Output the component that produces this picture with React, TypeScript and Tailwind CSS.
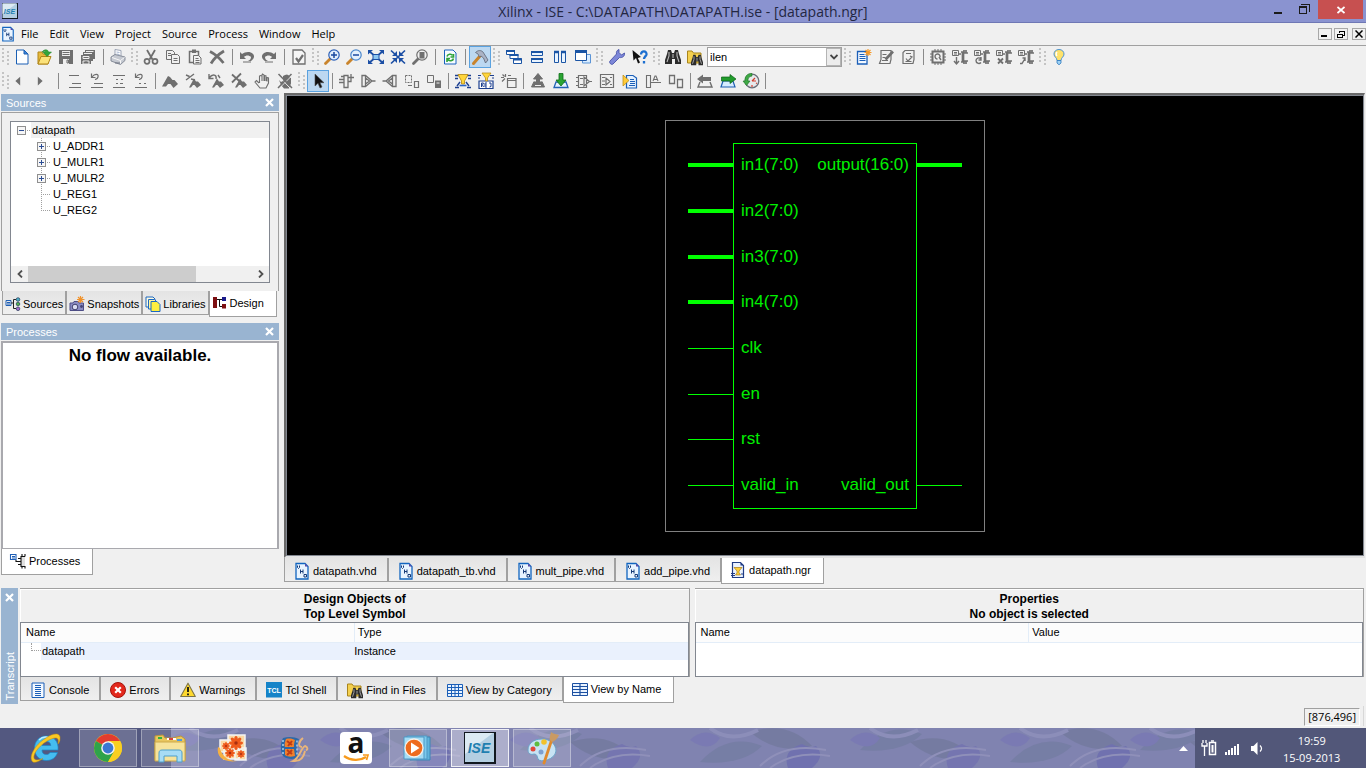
import React from "react";

const G = "#6f6f6f";

function Svg({ children, size = 18, vb = 16 }: { children: React.ReactNode; size?: number; vb?: number }) {
  return (
    <svg width={size} height={size} viewBox={`0 0 ${vb} ${vb}`} fill="none" aria-hidden="true" className="shrink-0 overflow-visible">
      {children}
    </svg>
  );
}

const binoculars = (
  <>
    <path d="M3 1h3l1 3h2l1-3h3l1 4 2 6v4h-6v-5H7v5H0v-4l2-6z" fill="#2c2c2c" />
    <path d="M4 3v4l-2 6M12 3v4l2 6M8 5v4" stroke="#b9b9b9" strokeWidth="1.100" />
  </>
);

const magnifier = (color: string, handle: string, fill: string) => (
  <>
    <path d="M6.500 9.500L1.500 14.500" stroke={handle} strokeWidth="2.800" strokeLinecap="round" />
    <circle cx="10" cy="6" r="5.200" fill={fill} stroke={color} strokeWidth="1.200" />
  </>
);

const chipTail = <path d="M9 3h1.500v10H9M12 1v3M14 1v3h-2.500v8H14v3M12 12v3M16 4h-3M16 12h-3" stroke={G} strokeWidth="1.700" />;
const chipDoc = (
  <>
    <path d="M.5 1.500h6v5h-6zM2 3.500h3M2 5h3" stroke={G} strokeWidth="1" />
    <path d="M6 5h3" stroke={G} strokeWidth="1.500" />
  </>
);

const smallFlag = <path d="M4 14.500l5-9 2 3h2l3 3.500-4 3-2.500-3H8l-2 2.500z" fill={G} />;

const art: Record<string, React.ReactNode> = {
  newFile: (
    <>
      <path d="M2.500 1h7.500l4 4v10H2.500z" fill="#fdfeff" stroke="#1a5fb4" />
      <path d="M10 1v4h4z" fill="#3f86d8" stroke="#1a5fb4" />
    </>
  ),
  open: (
    <>
      <path d="M2 15V3h4l1 2h5v10z" fill="#e7b93c" stroke="#b08518" />
      <path d="M2 15l3-7.500h10L12 15z" fill="#fbe27a" stroke="#b08518" />
      <path d="M6 3c2-3 6-3 6.500 0h3l-4.500 4.500-4-4.500h2.500C9.500 2 8.500 2 6 3z" fill="#33a53a" stroke="#1d7d24" strokeWidth=".5" />
    </>
  ),
  save: (
    <>
      <path d="M1 1h14v14H1z" fill={G} />
      <path d="M4 2h8v5H4zM5 10h6v5H5z" fill="#efefef" />
      <path d="M4.500 3.500h7M4.500 5.500h7M9 11h1.500v3H9z" stroke={G} />
    </>
  ),
  saveAll: (
    <>
      <path d="M5 1h10v9h-2v2h-2v3H1V6h2V3h2z" fill={G} />
      <path d="M6 2.500h7.500M4 4.500h8M3 7.500h6v2H3zM3 12h6v3H3z" stroke="#eee" />
      <path d="M6 12v2" stroke={G} />
    </>
  ),
  print: (
    <>
      <path d="M5 7V.5l6 1v6" fill="#fff" stroke="#9aa3b5" />
      <path d="M6.500 3l3 .5M6.500 5l3 .5" stroke="#8b9fc2" strokeWidth=".8" />
      <path d="M1 8l4-2.500L15 8v3.500l-4.500 4L1 12z" fill="#c5c9d1" stroke="#7e8492" strokeWidth=".9" />
      <path d="M2 8.500l8.500 3 4-3M10.500 11.500v3" stroke="#f8f8f8" />
      <path d="M5 14h5" stroke="#6d7280" />
    </>
  ),
  cut: (
    <>
      <path d="M4 1l5.500 9.500M12 1L6.500 10.500" stroke={G} strokeWidth="1.800" />
      <circle cx="4" cy="12.300" r="2.500" stroke={G} strokeWidth="1.700" />
      <circle cx="12" cy="12.300" r="2.500" stroke={G} strokeWidth="1.700" />
    </>
  ),
  copy: (
    <>
      <path d="M1.500 1.500h6l2 2v7h-8z" stroke={G} />
      <path d="M6.500 5.500h6l2 2v7h-8z" fill="#f0f0f0" stroke={G} />
      <path d="M3 4.500h3M3 6.500h3M8.500 9.500h4M8.500 11.500h4" stroke={G} />
    </>
  ),
  paste: (
    <>
      <path d="M2.500 2.500h9v11h-9z" stroke={G} strokeWidth="1.500" />
      <path d="M5 .5h4V4H5z" fill={G} />
      <path d="M6.500 6.500h5l2.500 2.500v6H6.500z" fill="#f0f0f0" stroke={G} />
      <path d="M8.500 9.500h3M8.500 11.500h4M8.500 13.500h4" stroke={G} />
    </>
  ),
  del: <path d="M1 2.500c5 2.500 10 7 13.500 11.500M15 2C10 5 5 9.500 2 14.500" stroke={G} strokeWidth="2.700" />,
  undo: (
    <>
      <path d="M1 3v7h6L5 8c2-2 5-2 7 0 0 2-1 3-3 4h3c3-2 4-5 2-7-3-3-8-2-11 0z" fill={G} />
      <path d="M4 13h8" stroke={G} />
    </>
  ),
  redo: (
    <>
      <path d="M15 3v7H9l2-2C9 6 6 6 4 8c0 2 1 3 3 4H4C1 10 0 7 2 5c3-3 8-2 11 0z" fill={G} />
      <path d="M4 13h8" stroke={G} />
    </>
  ),
  check: (
    <>
      <path d="M2 1h9l3 3v11H2z" fill="#f5f5f5" stroke={G} strokeWidth="1.300" />
      <path d="M5 9l2.500 3.500L12 6" stroke={G} strokeWidth="2.200" />
    </>
  ),
  zoomIn: (
    <>
      {magnifier("#2b5fb8", "#c9842c", "#e4f0fc")}
      <path d="M7 6h6M10 3v6" stroke="#1b4aa0" strokeWidth="1.500" />
    </>
  ),
  zoomOut: (
    <>
      {magnifier("#4a86cc", "#c9842c", "#e4f0fc")}
      <path d="M7 6h6" stroke="#1b4aa0" strokeWidth="1.500" />
    </>
  ),
  fit: (
    <>
      <path d="M1 2l14 12M15 2L1 14" stroke="#1c4fa5" strokeWidth="1.800" />
      <path d="M5 5.500h6v5H5z" fill="#8cc6f2" stroke="#1c4fa5" />
      <path d="M0 1h5L0 5.500zM16 1h-5l5 4.500zM0 15h5l-5-4.500zM16 15h-5l5-4.500z" fill="#1c4fa5" />
    </>
  ),
  shrink: (
    <>
      <path d="M1 1.500l14 13M15 1.500L1 14.500" stroke="#1c4fa5" strokeWidth="1.700" />
      <path d="M7 2v5H2zM9 2v5h5zM7 14V9H2zM9 14V9h5z" fill="#1c4fa5" />
    </>
  ),
  zoomSel: (
    <>
      {magnifier(G, G, "#f2f2f2")}
      <path d="M7.500 3h5v6.500h-5z" fill={G} />
    </>
  ),
  refresh: (
    <>
      <path d="M2.500 1h8.500l3 3v11H2.500z" fill="#f6fbff" stroke="#1a63bd" />
      <path d="M5 7.500C5.500 5 9.500 4.500 10.500 6.500M11.500 5v3H8.500M11.500 9.500c-.5 2.500-4.500 3-5.500 1M5 13V9.500h3" stroke="#2ea33a" strokeWidth="1.600" />
    </>
  ),
  hammer: (
    <>
      <path d="M8 7L1.500 14.500" stroke="#c9842c" strokeWidth="3" strokeLinecap="round" />
      <path d="M3.500 3.500C6 1 9 1 11 3l5 8-2.500 3-2-5-2.500-2-1.500 1L6 5z" fill="#aab2c4" stroke="#5c6475" strokeWidth=".8" />
    </>
  ),
  cascade: (
    <>
      <path d="M.5 1.500h8v4h-8zM4 5.500h8v4H4zM7.500 9.500h8v5h-8z" fill="#fff" stroke="#1b55a5" />
      <path d="M0 2h9M3.500 6h9M7 10.500h9" stroke="#1b55a5" strokeWidth="2" />
    </>
  ),
  tileH: (
    <>
      <path d="M2.500 2.500h11v4h-11zM2.500 9.500h11v4h-11z" fill="#e9f4ff" stroke="#1b55a5" />
      <path d="M2 3h12M2 10h12" stroke="#1b55a5" strokeWidth="2.200" />
    </>
  ),
  tileV: (
    <>
      <path d="M2.500 2.500h4v11h-4zM9.500 2.500h4v11h-4z" fill="#e9f4ff" stroke="#1b55a5" />
      <path d="M2 3h5M9 3h5" stroke="#1b55a5" strokeWidth="2.400" />
    </>
  ),
  arrange: (
    <>
      <path d="M7.500 5.500h8v8.500h-8z" fill="#d8ecff" stroke="#5b94d6" />
      <path d="M.5 2.500h11v9H.5z" fill="#fff" stroke="#1b55a5" />
      <path d="M0 2.500h12" stroke="#1b55a5" strokeWidth="3" />
    </>
  ),
  wrench: (
    <path d="M10 .5c-2 .5-3 2.500-2.500 4.500L1 12c-1.500 1.500 1.500 4.500 3 3l6.500-6.500c2.500.5 5.500-1 5-4.500l-3 2-2.500-2.500z" fill="#7d87d8" stroke="#4852a8" strokeWidth=".9" />
  ),
  whatsThis: (
    <>
      <path d="M.5 1l1 10.500L4 9l2 5.500 2-1-2.200-4.500L9 8z" fill="#111" />
      <path d="M9 5.500c0-4.500 6-4 5.500 0C14 7.500 12 7.500 12 10M12 12v2.500" stroke="#1c6fd0" strokeWidth="2.300" />
    </>
  ),
  find: binoculars,
  findFiles: (
    <>
      <path d="M.5 14V2H5l1.500 2H14v10z" fill="#f4d04f" stroke="#a8841c" />
      <g transform="translate(4 5) scale(.75)">{binoculars}</g>
    </>
  ),
  newDoc: (
    <>
      <path d="M1.500 2.500h9.500v12.500H1.500z" fill="#f2f8ff" stroke="#1b5fb8" strokeWidth="1.300" />
      <path d="M3.500 5.500h5M3.500 7.500h6M3.500 9.500h6M3.500 11.500h6" stroke="#1b5fb8" />
      <path d="M12 0v7M8.500 3.500h7M9.500 1l5 5M14.500 1l-5 5" stroke="#f59a2a" strokeWidth="1.200" />
    </>
  ),
  editDoc: (
    <>
      <path d="M3 1.500h10v9l-1 4H1.500l1.500-4z" stroke={G} strokeWidth="1.200" />
      <path d="M4.500 5.500h4M4.500 8.500h3M4 11.500h6" stroke={G} />
      <path d="M7.500 10.500L15 2.500" stroke={G} strokeWidth="2.600" />
    </>
  ),
  docCheck: (
    <>
      <path d="M5 1.500h9v9l-1 4H3v-11z" stroke={G} strokeWidth="1.200" />
      <path d="M6 4.500h5M10 7l2 1-4 4-2-2.500M5.500 12.500h6" stroke={G} strokeWidth="1.200" />
    </>
  ),
  chip: (
    <>
      <path d="M2.500 2.500h11v11h-11z" stroke={G} strokeWidth="2" />
      <path d="M5 0v3M8 0v3M11 0v3M5 13v3M8 13v3M11 13v3M0 5h3M0 8h3M0 11h3M13 5h3M13 8h3M13 11h3" stroke={G} />
      <path d="M7.500 10A2.500 2.500 0 1 1 10 8M9 8l2 3" stroke={G} strokeWidth="1.400" />
    </>
  ),
  chipDown: (
    <>
      {chipDoc}
      {chipTail}
      <path d="M4.500 8v6M2 12l2.500 3L7 12" stroke={G} strokeWidth="1.400" />
    </>
  ),
  chipTurn: (
    <>
      {chipDoc}
      {chipTail}
      <path d="M7 10c-2-2-5-1-5 1.500S5 15.500 7 13.500M7 8v3H4.500" stroke={G} strokeWidth="1.400" />
    </>
  ),
  chipX: (
    <>
      {chipDoc}
      {chipTail}
      <path d="M2 9.500l5 5M7 9.500l-5 5" stroke={G} strokeWidth="1.800" />
    </>
  ),
  chipUp: (
    <>
      {chipDoc}
      {chipTail}
      <path d="M2 14.500h2l3-5M4.500 9H7v3" stroke={G} strokeWidth="1.400" />
    </>
  ),
  bulb: (
    <>
      <path d="M8 .5c-3.200 0-5 2.200-5 4.600C3 8 6 8.500 6 11.500h4C10 8.500 13 8 13 5.100 13 2.700 11.200.5 8 .5z" fill="#ffe26a" stroke="#4a92d2" />
      <path d="M6 3C5 4.200 5 6 6 7" stroke="#fff" strokeWidth="1.400" />
      <path d="M6 11.500h4V14l-2 1.800L6 14z" fill="#9fd2f5" stroke="#2d79bd" strokeWidth=".8" />
    </>
  ),
  prev: <path d="M10.500 3v10L5 8z" fill={G} />,
  next: <path d="M5.500 3v10L11 8z" fill={G} />,
  lines: <path d="M2 2.500h10M5 10.500h9M2 14.500h12" stroke={G} />,
  linesUndo: <path d="M2.500.5v4h4M3 4c3-4 7-3 6 0-.5 2-1.500 2-3 2.500M5 10.500h9M2 14.500h12" stroke={G} strokeWidth="1.200" />,
  linesDot: <path d="M2 2.500h12M5 6.500h2M10 6.500h2M5 10.500h2M9 10.500h3M2 14.500h12" stroke={G} strokeWidth="1.200" />,
  linesUndoDot: <path d="M2.500.5v4h4M3 4c3-4 7-3 6 0-.5 2-1.500 2-3 2.500M6 10.500h2M11 10.500h2M2 14.500h12" stroke={G} strokeWidth="1.200" />,
  flag: <path d="M0 13.500L6 3l2 1 2.500 3h2l3.500 4-4.500 4-3-4H6l-2 2.500z" fill={G} />,
  flagNext: (
    <>
      {smallFlag}
      <path d="M1 7l8-6M1 2l3.500 1.500M6 6l4 1" stroke={G} strokeWidth="1.400" />
    </>
  ),
  flagPrev: (
    <>
      {smallFlag}
      <path d="M1 1v4.500h4.500M1 5c4-5 8-3 7 1M10 2l2 3" stroke={G} strokeWidth="1.400" />
    </>
  ),
  flagClear: (
    <>
      {smallFlag}
      <path d="M1 1.500l9 8M10 .5l-9 9" stroke={G} strokeWidth="1.800" />
    </>
  ),
  hand: (
    <path d="M5 10L2.500 7.500 1 9l5 6h6l2.500-5V5l-1.500-.5V8.500M12 8V3l-1.500-.5V8M10 8V2L8.500 1 8 2v6M8 8V3L6.500 2.500 5.500 3v7" stroke={G} strokeWidth="1.100" />
  ),
  handX: (
    <>
      <path d="M4 9L2 7l2 5 3 3.500h5l2-5V5l-2-1V2.500L10 1.500 8 2 6 3v5z" fill={G} />
      <path d="M0 1.500L14 16M16 1.500L1.500 16" stroke="#efefef" strokeWidth="1" />
      <path d="M1.500 1L15 15M14.500 1L1 15" stroke={G} strokeWidth="1.500" />
    </>
  ),
  pointer: <path d="M5 1v12l3-2.700L10 15l2-1-2-4.300h4z" fill="#111" stroke="#4d4d4d" strokeWidth=".6" />,
  gateIn: (
    <path d="M6 2.500h4v12H6zM1 6.500h5M1 9.500h5M3 3.500h3M10 4.500h6M13 4.500v4h-3M13 1v3" stroke={G} strokeWidth="1.300" />
  ),
  gateFwd: <path d="M2 2.500v11h3.500L12 8 5.500 2.500zM5.500 3v10M5.500 5l4 3-4 3M12 8h3.500" stroke={G} strokeWidth="1.300" />,
  gateBack: <path d="M14 2.500v11h-3.500L4 8l6.500-5.500zM10.500 3v10M10.500 5l-4 3 4 3M4 8H.5" stroke={G} strokeWidth="1.300" />,
  boxesDash: (
    <>
      <path d="M1.500 2.500h6v7h-6z" stroke={G} strokeDasharray="2 1" />
      <path d="M10.500 8.500h4v6h-4zM4 12.500h4" stroke={G} strokeWidth="1.200" />
    </>
  ),
  boxesLock: (
    <>
      <path d="M1.500 2.500h6v7h-6z" stroke={G} />
      <path d="M9 7.500h6V15H9z" fill={G} />
      <path d="M10.500 10h3" stroke="#eee" />
    </>
  ),
  funnel: (
    <>
      <path d="M0 2.500h3.500M12 2.500h4M0 5.500h3M13 5.500h3M0 14.500h4M12 14.500h4M2 13l3-4M14 13l-3-4" stroke="#1c3f8f" strokeWidth="1.400" />
      <path d="M3 1.500h10L9.500 8v3h-3V8z" fill="#ffd63c" stroke="#b1860f" strokeWidth=".8" />
      <path d="M4.500 12.500h7" stroke="#2a65c8" strokeWidth="1.600" />
    </>
  ),
  funnelRej: (
    <>
      <path d="M0 2.500h3M12 2.500h4M0 5h2M14 5h2M1 8h14v7.500H1z" fill="#fff" stroke="#1c3f8f" strokeWidth="1.200" />
      <path d="M4 0h9L9.500 5v3h-2V5z" fill="#ffd63c" stroke="#b1860f" strokeWidth=".7" />
      <path d="M3.500 14v-4h2l-1 2 1 2M9 10H7v4h2M7 12h2M11 10h2v3.500l-1.500.5" stroke="#1c3f8f" />
    </>
  ),
  windowSpark: (
    <>
      <path d="M6.500 5.500h8.500v9H6.500zM6.500 7.500H15" stroke={G} strokeWidth="1.200" />
      <path d="M0 4.500h3M4.500 1v3M1.500 1.500l2 2M1 8.500l3-3M7 2.500h3" stroke={G} strokeWidth="1.200" />
    </>
  ),
  pushUp: (
    <>
      <path d="M8 .5L3.500 6h3v4.500h3V6h3zM4 8.500L1.500 14h13L12 8.500" fill={G} stroke={G} />
      <path d="M5 12.500h6" stroke="#eee" />
    </>
  ),
  pushDown: (
    <>
      <path d="M3 9l-2 5.500h14L13 9z" fill="#e3f1ff" stroke="#2262b5" strokeWidth="1.300" />
      <path d="M6 .5h4V7h3l-5 6-5-6h3z" fill="#2aa432" stroke="#0e6d18" strokeWidth=".8" />
    </>
  ),
  schem: (
    <path d="M2.500 2.500h8v12h-8zM0 4.500h2M0 8.500h2M0 12.500h2M4 5.500h3M4 11.500h3M8 4v9l5.500-4.500zM13 8.500h3" stroke={G} strokeWidth="1.200" />
  ),
  schemBox: <path d="M1.500 1.500h13v13h-13zM3 4.500h3M3 8h3M3 11.500h3M7 5v7l4-3.500zM11 4.500h2M11 11.500h2" stroke={G} strokeWidth="1.200" />,
  docYellow: (
    <>
      <path d="M4.500 2.500H11l3.500 2.500v10h-10z" fill="#e6f2ff" stroke="#1b5fb8" strokeWidth="1.200" />
      <path d="M8 6.500h4M8 8.500h5M8 10.500h5M7 12.500h6" stroke="#1b5fb8" />
      <path d="M1 2l6 5.500L1 13z" fill="#ffcb3a" stroke="#b8860b" strokeWidth=".7" />
    </>
  ),
  align: <path d="M1.500 2.500h4v12h-4zM6 9.500h10M8 8L10 3h1l2 5M9 6.500h3" stroke={G} strokeWidth="1.100" />,
  boxes: <path d="M1.500 2.500h5v8h-5zM9.500 6.500h5v8h-5z" stroke={G} strokeWidth="1.300" />,
  back: (
    <>
      <path d="M0 6l6-4.500V4h8v4H6v2.500z" fill={G} />
      <path d="M3 9l-2 5h14l-2-5" stroke={G} strokeWidth="1.400" />
    </>
  ),
  forward: (
    <>
      <path d="M3 8l-2 6h14l-2-6z" fill="#d6ebff" stroke="#1c5db0" strokeWidth="1.200" />
      <path d="M16 6l-6-4.500V4H1.500v4H10v2.500z" fill="#219c2c" stroke="#0c6216" strokeWidth=".7" />
    </>
  ),
  gauge: (
    <>
      <circle cx="9" cy="8" r="6.800" fill="#e7e9ed" stroke="#6a6f7a" strokeWidth="1.300" />
      <path d="M9 8l3-3M9 8h4M9 12v2M13 10l1 .5" stroke="#d43c2c" strokeWidth="1.200" />
      <path d="M9 .5C4 0 1.500 4 2 8H0l3.500 4.500L7 8H5C4.700 5 6 3.500 9 3z" fill="#3ea845" stroke="#1b7024" strokeWidth=".6" />
    </>
  ),
};

const hdlDoc = (
  <>
    <path d="M2 .5h9l3 3V16H2z" fill="#e9f4ff" stroke="#1265bf" strokeWidth="1.300" />
    <path d="M11 .5v3h3z" fill="#5a4aa8" />
    <path d="M3.500 2.500v2l1 1 1-1v-2M6.500 6.500v4M9 6.500v4M6.500 8.500H9M10 11.500h2.500V14H10z" stroke="#163a77" />
  </>
);

const isePlate = (
  <>
    <path d="M0 0h16v16H0z" fill="#11181f" />
    <path d="M.5.500h14.500v14.500H.500z" fill="#b4cfe2" />
    <path d="M.500.500h14L.500 11z" fill="#dceaf3" />
    <text x="7.500" y="10.500" textAnchor="middle" fontFamily="Liberation Sans, sans-serif" fontSize="7" fontWeight="bold" fontStyle="italic" fill="#1f7fb0">ISE</text>
  </>
);

const sheet: Record<string, React.ReactNode> = {
  srcTree: (
    <>
      <path d="M1 4.500h5v5H1zM2 6.500h3M2 8h3" stroke="#1f5fb5" />
      <path d="M6 7h2.500M11 3.500H8.500v9H11" stroke="#222" />
      <circle cx="13" cy="3.500" r="1.800" fill="#4bb1c8" stroke="#235" strokeWidth=".7" />
      <circle cx="13" cy="8" r="1.800" fill="#4bb14b" stroke="#235" strokeWidth=".7" />
      <circle cx="13" cy="12.800" r="1.800" fill="#a26bd0" stroke="#235" strokeWidth=".7" />
    </>
  ),
  camera: (
    <>
      <path d="M1 7h3l1-1.500h4L10 7h4.500v7.500H1z" fill="#8a8cc4" stroke="#4d4d86" />
      <circle cx="6" cy="11" r="2.800" fill="#d9dcf2" stroke="#3f3f6d" />
      <circle cx="12.500" cy="10.500" r="1.400" fill="#444476" />
      <path d="M11.500 0v7M8 3.500h7.500M9 1l5 5M14 1L9 6" stroke="#f0922b" strokeWidth="1.200" />
    </>
  ),
  libs: (
    <>
      <path d="M1 1h7l2 2v8H1z" fill="#fffbe0" stroke="#1c68c2" />
      <path d="M3.500 3.500h6l2 2V13h-8z" fill="#fff5a0" stroke="#1c68c2" />
      <path d="M6 5.500h6l3 3v7H6z" fill="#ffee3f" stroke="#1c68c2" />
    </>
  ),
  design: (
    <>
      <path d="M1 2h4v11H1zM10 9h4v4.500h-4z" fill="#7d0f12" />
      <path d="M10 2h4v4h-4z" fill="#1a1a8c" />
      <path d="M5 4.500h5M7.500 4.500v7H10" stroke="#111" />
    </>
  ),
  proc: (
    <>
      <path d="M.5 1.500h5.500v5H.5zM2 3.500h3M2 5h3" stroke="#1f5fb5" strokeWidth="1.100" />
      <path d="M11 3h4v10h-4z" fill="#e0e0e0" />
      <path d="M15 3.500h-4v10h4M8 5.500h3M8 11.500h3M12 1v2.500M15 1v2.500M12 13v2.500M15 13v2.500M6 7v1.500h5" stroke="#111" strokeWidth="1.100" />
    </>
  ),
  hdl: hdlDoc,
  ngr: (
    <>
      <path d="M2.500.5h8l3 3v12h-11z" fill="#eaf2ff" stroke="#213c84" strokeWidth="1.200" />
      <path d="M10.500.5v3h3z" fill="#213c84" />
      <path d="M4 5.500h8L9 9v2l1.500 2h-5L7 11V9z" fill="#ffcf3a" stroke="#a87b12" strokeWidth=".7" />
      <path d="M1 11.500h4M1 13.500h4M11 12h3" stroke="#213c84" />
    </>
  ),
  console: (
    <>
      <path d="M2 1h12v14.500H2z" fill="#f4f9ff" stroke="#1b5fb8" />
      <path d="M5 3.500h6M5 5.500h6M5 7.500h6M5 9.500h6M5 11.500h6M5 13.500h6" stroke="#1b5fb8" />
    </>
  ),
  error: (
    <>
      <circle cx="8" cy="8" r="7.500" fill="#e3281c" stroke="#a5130b" />
      <path d="M5.200 5.200l5.600 5.600M10.800 5.200l-5.600 5.600" stroke="#fff" strokeWidth="2.200" />
    </>
  ),
  warning: (
    <>
      <path d="M8 1.200L15.300 14.500H.7z" fill="#ffd92e" stroke="#7c7448" strokeWidth="1.100" strokeLinejoin="round" />
      <path d="M8 5v5M8 11.500v1.800" stroke="#111" strokeWidth="1.800" />
    </>
  ),
  tcl: (
    <>
      <path d="M0 0h16v15.500H0z" fill="#1583c8" />
      <text x="8" y="11" textAnchor="middle" fontFamily="Liberation Sans, sans-serif" fontSize="7" fontWeight="bold" fill="#fff">TCL</text>
    </>
  ),
  findFiles: art.findFiles,
  grid: (
    <>
      <path d="M.5 2.500h15v12H.5z" fill="#e9f3ff" stroke="#1b5fb8" />
      <path d="M.5 5.500h15M.5 8.500h15M.5 11.500h15M4.500 2.500v12M8 2.500v12M11.500 2.500v12" stroke="#1b5fb8" />
    </>
  ),
  table: (
    <>
      <path d="M.5 2.500h15v12H.5z" fill="#e9f3ff" stroke="#1b4fa0" />
      <path d="M.5 5.500h15M.5 8.500h15M.5 11.500h15M8 2.500v12" stroke="#1b4fa0" strokeWidth="1.200" />
    </>
  ),
};

function Handle() {
  return (
    <span className="flex h-full w-[11px] shrink-0 items-center justify-center" aria-hidden="true">
      <svg width="7" height="18" shapeRendering="crispEdges">
        {[0, 4, 8, 12].map((y) => (
          <g key={y}>
            <rect x="0" y={y} width="2" height="2" fill="#c4c4c4" />
            <rect x="5" y={y + 3} width="2" height="2" fill="#c4c4c4" />
          </g>
        ))}
      </svg>
    </span>
  );
}

function Bar({ tight = false }: { tight?: boolean }) {
  return (
    <span className={`flex shrink-0 justify-center ${tight ? "w-[6px]" : "w-2"}`}>
      <span className="h-4 w-px bg-[#8a8a8a]" />
    </span>
  );
}

function Tools({ names, wide = false, active }: { names: string[]; wide?: boolean; active?: string }) {
  return (
    <>
      {names.map((n) => (
        <button
          key={n}
          type="button"
          aria-label={n}
          className={`flex h-[22px] shrink-0 items-center justify-center ${wide ? "w-[23px]" : "w-[22px]"} ${active === n ? "border border-[#5aa2e0] bg-[#bcd8f1]" : ""}`}
        >
          <Svg size={16}>{art[n]}</Svg>
        </button>
      ))}
    </>
  );
}

function Cross() {
  return (
    <svg width="9" height="9" viewBox="0 0 9 9" aria-hidden="true">
      <path d="M1 1l7 7M8 1L1 8" stroke="#fff" strokeWidth="2.200" />
    </svg>
  );
}

function PanelHeader({ title }: { title: string }) {
  return (
    <header className="mb-px flex h-[17px] shrink-0 items-center justify-between bg-[#99b4d1] px-[5px] text-white">
      <h2>{title}</h2>
      <button type="button" aria-label={`Close ${title}`}>
        <Cross />
      </button>
    </header>
  );
}

function Tab({ icon, label, active = false, snug = false }: { icon: string; label: string; active?: boolean; snug?: boolean }) {
  const pad = snug ? (active ? "gap-[2px] pl-[2px] pr-3" : "gap-[2px] px-[2px]") : active ? "gap-[3px] pl-2 pr-3" : "gap-[3px] pl-[9px] pr-[10px]";
  const look = active ? "h-[26px] bg-white pb-[2px]" : "h-6 bg-linear-to-b from-[#e4e4e4] to-[#efefef] pt-[2px]";
  return (
    <button
      type="button"
      role="tab"
      aria-selected={active}
      className={`flex shrink-0 items-center border-x border-b border-[#a0a0a0] whitespace-nowrap ${pad} ${look}`}
    >
      <Svg size={16}>{sheet[icon]}</Svg>
      <span>{label}</span>
    </button>
  );
}

function ToggleBox({ open = false }: { open?: boolean }) {
  return (
    <svg width="9" height="9" shapeRendering="crispEdges" aria-hidden="true" className="shrink-0">
      <rect x=".5" y=".5" width="8" height="8" fill="#f6f6f6" stroke="#8f8f8f" />
      <path d={open ? "M2 4.500h5" : "M2 4.500h5M4.500 2v5"} stroke="#2c4d94" />
    </svg>
  );
}

function TreeChild({ label, leaf = false, last = false }: { label: string; leaf?: boolean; last?: boolean }) {
  return (
    <li className="flex h-4 items-center pl-[26px]">
      <span className="relative flex h-4 w-4 shrink-0 items-center">
        <svg width="16" height="16" shapeRendering="crispEdges" className="absolute inset-0" aria-hidden="true">
          <path d={last ? "M4.500 0v8M4 8.500h9" : "M4.500 0v16M4 8.500h9"} stroke="#a0a0a0" strokeDasharray="1 1" fill="none" />
        </svg>
        {!leaf && (
          <button type="button" aria-label={`Expand ${label}`} className="relative">
            <ToggleBox />
          </button>
        )}
      </span>
      <span>{label}</span>
    </li>
  );
}

function SourcesPanel() {
  return (
    <section className="mb-[6px] flex shrink-0 flex-col">
      <PanelHeader title="Sources" />
      <div className="border-x border-t border-[#a0a0a0] p-2">
        <div className="flex h-[162px] flex-col justify-between border border-[#828790] bg-white">
          <ul>
            <li className="flex h-4 items-center pl-[6px]">
              <button type="button" aria-label="Collapse datapath">
                <ToggleBox open />
              </button>
              <span className="mx-px w-[3px] border-t border-dotted border-[#a0a0a0]" />
              <span className="flex h-4 flex-1 items-center bg-[#f0f0f0] pl-px">datapath</span>
            </li>
            <li>
              <ul>
                <TreeChild label="U_ADDR1" />
                <TreeChild label="U_MULR1" />
                <TreeChild label="U_MULR2" />
                <TreeChild label="U_REG1" leaf />
                <TreeChild label="U_REG2" leaf last />
              </ul>
            </li>
          </ul>
          <div className="flex h-4 items-center bg-[#f0f0f0]">
            <button type="button" aria-label="Scroll left" className="flex w-[17px] justify-center">
              <svg width="6" height="8" aria-hidden="true"><path d="M5 .5L1.500 4 5 7.500" stroke="#505050" strokeWidth="1.800" fill="none" /></svg>
            </button>
            <div className="h-full flex-1">
              <div className="h-full w-3/4 bg-[#cdcdcd]" />
            </div>
            <button type="button" aria-label="Scroll right" className="flex w-[17px] justify-center">
              <svg width="6" height="8" aria-hidden="true"><path d="M1 .5L4.500 4 1 7.500" stroke="#505050" strokeWidth="1.800" fill="none" /></svg>
            </button>
          </div>
        </div>
      </div>
      <div role="tablist" className="flex h-[26px] items-start pl-px">
        <Tab icon="srcTree" label="Sources" snug />
        <Tab icon="camera" label="Snapshots" snug />
        <Tab icon="libs" label="Libraries" snug />
        <Tab icon="design" label="Design" snug active />
      </div>
    </section>
  );
}

const pins = [
  { label: "in1(7:0)", y: 45, bus: true },
  { label: "in2(7:0)", y: 91, bus: true },
  { label: "in3(7:0)", y: 137, bus: true },
  { label: "in4(7:0)", y: 182, bus: true },
  { label: "clk", y: 228, bus: false },
  { label: "en", y: 274, bus: false },
  { label: "rst", y: 319, bus: false },
  { label: "valid_in", y: 365, bus: false },
];
const outs = [
  { label: "output(16:0)", y: 45, bus: true },
  { label: "valid_out", y: 365, bus: false },
];

function Schematic() {
  return (
    <svg width="320" height="412" viewBox="0 0 320 412" shapeRendering="crispEdges" role="img" aria-label="datapath top level symbol" className="shrink-0">
      <rect x=".5" y=".5" width="319" height="411" fill="none" stroke="#808080" />
      <rect x="68.500" y="23.500" width="183" height="365" fill="none" stroke="#00ff00" />
      <g fill="#00f000" fontFamily="Liberation Sans, Arial, sans-serif" fontSize="17">
        {pins.map((p) => (
          <g key={p.label}>
            <rect x="23" y={p.bus ? p.y - 2 : p.y} width="45" height={p.bus ? 4 : 1} fill="#00ff00" />
            <text x="76" y={p.y + 5}>{p.label}</text>
          </g>
        ))}
        {outs.map((p) => (
          <g key={p.label}>
            <rect x="252" y={p.bus ? p.y - 2 : p.y} width="45" height={p.bus ? 4 : 1} fill="#00ff00" />
            <text x="244" y={p.y + 5} textAnchor="end">{p.label}</text>
          </g>
        ))}
      </g>
    </svg>
  );
}

function ObjectPane({ title, subtitle, columns, rows }: { title: string; subtitle: string; columns: [string, string]; rows: [string, string][] }) {
  return (
    <section className="flex min-w-0 flex-1 flex-col border-t border-r border-[#a0a0a0]">
      <h2 className="h-[33px] border-t border-l border-white pt-[2px] text-center text-[12px] leading-[15px] font-bold">
        {title}
        <br />
        {subtitle}
      </h2>
      <div className="flex-1 border border-[#828790] bg-white">
        <table className="w-full table-fixed border-collapse text-left">
          <thead>
            <tr className="h-[19px] border-b border-[#e3edf8] bg-[#fcfcfc]">
              <th scope="col" className="border-r border-[#e3edf8] pl-[5px] font-normal">{columns[0]}</th>
              <th scope="col" className="pl-[3px] font-normal">{columns[1]}</th>
            </tr>
          </thead>
          <tbody>
            {rows.map((r) => (
              <tr key={r[0]} className="h-[17px]">
                <td className="p-0">
                  <div className="flex h-[17px] items-center pl-[10px]">
                    <span className="mb-2 h-2 w-[10px] border-b border-l border-dotted border-[#a0a0a0]" />
                    <span className="flex h-full flex-1 items-center bg-[#eaf1fd] pl-px">{r[0]}</span>
                  </div>
                </td>
                <td className="bg-[#eaf1fd] p-0">{r[1]}</td>
              </tr>
            ))}
          </tbody>
        </table>
      </div>
    </section>
  );
}

function Slot({ label, framed = false, bright = false, children }: { label: string; framed?: boolean; bright?: boolean; children: React.ReactNode }) {
  const frame = bright ? "border-white/80 bg-white/35" : framed ? "border-white/35 bg-white/15" : "border-transparent";
  return (
    <button type="button" aria-label={label} className={`flex h-[38px] w-[58px] shrink-0 items-center justify-center border ${frame}`}>
      <svg width="32" height="32" viewBox="0 0 32 32" fill="none" aria-hidden="true" className="overflow-visible">
        {children}
      </svg>
    </button>
  );
}

function Flower({ x, y, s }: { x: number; y: number; s: number }) {
  return (
    <g transform={`translate(${x} ${y}) scale(${s})`}>
      {[0, 45, 90, 135, 180, 225, 270, 315].map((a) => (
        <ellipse key={a} cx="0" cy="-5" rx="2.600" ry="5" transform={`rotate(${a})`} fill="#ee5a1c" />
      ))}
      <circle r="2.500" fill="#a82f10" />
    </g>
  );
}

function Petals() {
  return (
    <svg className="absolute inset-0 h-full w-full" viewBox="171 0 1024 40" preserveAspectRatio="xMinYMid slice" aria-hidden="true">
      <rect x="171" width="1600" height="40" fill="#8083b0" />
      <g opacity=".45">
        {[180, 330, 520, 700, 860, 1010, 1140].map((x, i) => (
          <g key={x}>
            <path d={`M${x} ${i % 2 ? 34 : 22}q28-30 62-16q-20 20-62 16z`} fill="#6b7898" />
            <path d={`M${x + 50} ${i % 2 ? 4 : 14}q38-12 62 14q-34 10-62-14z`} fill="#69738f" />
            <path d={`M${x + 88} 40q-6-18 14-24q8 5 14 2q10 10-4 22z`} fill={i % 2 ? "#5d5cae" : "#6865b2"} />
            <path d={`M${x + 10} 0q20 16 48 2`} stroke="#9c9cc6" strokeWidth="4" fill="none" />
            <path d={`M${x + 60} 38q24-24 66-16M${x + 70} 40q24-18 60-12`} stroke="#a3a0c6" strokeWidth="2" fill="none" />
            <path d={`M${x - 10} 12q14-14 30-2q-10 16-30 2z`} fill="#7370b8" />
          </g>
        ))}
      </g>
    </svg>
  );
}

function Taskbar() {
  return (
    <footer className="flex h-10 shrink-0 text-white">
      <div className="relative flex min-w-0 flex-1 overflow-hidden bg-[#8083b0]">
        <div className="absolute inset-y-0 right-0 left-[171px]">
          <Petals />
        </div>
        <div className="absolute inset-y-0 left-0 w-[171px] bg-[#535880]" />
        <nav aria-label="Taskbar" className="relative flex items-center gap-1 pl-[17px]">
          <Slot label="Internet Explorer">
            <path d="M16.500 4C9 4 4.500 9.500 4.500 16.500S9.500 28.500 16.500 28.500c5.500 0 9.500-3 11-8h-7.500c-1 1.500-2 2-3.500 2-3 0-4.500-1.500-4.500-4.500h16C29 9.500 23.500 4 16.500 4zM12 13.500c.5-2.500 2-4 4.500-4s4 1.500 4.300 4z" fill="#45bdf0" stroke="#1b86c8" strokeWidth=".7" />
            <path d="M9 8c3-3 7-3.500 10-2" stroke="#c0edff" strokeWidth="1.500" />
            <path d="M3 30C-2 26 4 13 16 6c7-5 15-6 14 1 0 2-1 4-2 5 1.500-6-1-8-9-4C9 13 1 24 5 27.500c2 1 5 0 8-1-4 3-8 4.500-10 3.500z" fill="#f9c824" stroke="#c58a0c" strokeWidth=".5" />
          </Slot>
          <Slot label="Chrome" framed>
            <circle cx="16" cy="16" r="14" fill="#f9cf20" />
            <path d="M16 16L3.900 9A14 14 0 0 1 28.100 9H16z" fill="#e23c2e" />
            <path d="M16 16L3.900 9A14 14 0 0 0 16 30l6-10.500z" fill="#2fa34b" />
            <path d="M28.100 9A14 14 0 0 1 16 30l6.100-10.500L22 12l-2-3z" fill="#f9cf20" />
            <circle cx="16" cy="16" r="6.800" fill="#f4f4f4" />
            <circle cx="16" cy="16" r="5.400" fill="#3b78d2" />
          </Slot>
          <Slot label="File Explorer" framed>
            <path d="M1 4l8-1 2 3h8l8-2 4 3v21H1z" fill="#e9c65e" stroke="#bd9736" />
            <path d="M4 5h4v2H4z" fill="#34b043" />
            <path d="M13 6h9v2h-9z" fill="#fff" />
            <path d="M15 6h4v2h-4z" fill="#d8443a" />
            <path d="M23 7h5v2h-5z" fill="#4b9ae0" />
            <path d="M1 10h30v19H1z" fill="#f7e39b" stroke="#cda94b" />
            <path d="M5 30V21c0-2 1-3 3-3h17c2 0 3 1 3 3v9h-5v-6H10v6z" fill="#a7dcf5" stroke="#4d9fcb" />
          </Slot>
          <Slot label="Photo Gallery">
            <path d="M4 8h13v12H4zM19 16h11v12H19zM8 14h15v13H8zM12 3h17v15H12z" fill="#fbd9a5" stroke="#f4f4f4" strokeWidth="1.500" />
            <Flower x={20} y={11} s={0.7} />
            <Flower x={10} y={14} s={0.4} />
            <Flower x={14} y={21} s={0.5} />
            <Flower x={25} y={22} s={0.4} />
            <path d="M2 15c-2 10 6 16 19 14-8 0-15-4-17-13z" fill="#f5b042" />
          </Slot>
          <Slot label="Movie Maker">
            <path d="M5 6c6-2 12-1 16 1-3 6-3 13 0 19-6 1-11 2-16-2-3-5-3-12 0-18z" fill="#2c69a8" />
            <path d="M5 8v16M19 8.500v16" stroke="#a6cdea" strokeWidth="1.500" strokeDasharray="2 2" />
            <path d="M8 7c4-1 7 0 9 1-1 4-1 4-1 7H7c-1-3 0-5 1-8zM7 17h9l1 7c-4 1-7 1-10-1z" fill="#f0802c" />
            <path d="M9 9l5 4M14 9l-4 5M9 18l5 4M14 18l-5 5" stroke="#c03c14" strokeWidth="2" />
            <path d="M25 6c-5 4-5 9-1 9M28 18c2 0 2-3-1-4-5 3-5 12-12 15 8 1 11-5 12-10" stroke="#e8b57a" strokeWidth="1.900" />
          </Slot>
          <Slot label="Amazon">
            <rect width="32" height="32" rx="4" fill="#fff" />
            <text x="16" y="21" textAnchor="middle" fontFamily="Open Sans, sans-serif" fontSize="28" fontWeight="bold" fill="#111">a</text>
            <path d="M4 24c7 5 16 5 22 1" stroke="#f79a1c" strokeWidth="2.200" />
            <path d="M23 23h5l-1.500 5" stroke="#f79a1c" strokeWidth="1.700" />
          </Slot>
          <Slot label="Media Player" framed>
            <path d="M8 5h20v23H8z" fill="#5fb4dc" stroke="#3d86b5" />
            <path d="M5 4h20v23H5z" fill="#7ccaec" stroke="#4e97c4" />
            <path d="M2 5h20v22H2z" fill="#a4dcf4" stroke="#4e97c4" />
            <circle cx="12" cy="16" r="9" fill="#ee6b1e" stroke="#f7f1ea" strokeWidth="1.300" />
            <path d="M9 10.500v11l8.500-5.500z" fill="#fff" />
          </Slot>
          <Slot label="Xilinx ISE" bright>
            <g transform="scale(2)">{isePlate}</g>
          </Slot>
          <Slot label="Paint" framed>
            <path d="M16 7C7 7 2 12 2 18c0 4 3 5 6 4 3 0 3 2 4 5 2 4 17 1 18-8 0-7-6-12-14-12z" fill="#c8e3f4" stroke="#6ca4ca" />
            <circle cx="7" cy="17" r="2.500" fill="#e2463a" />
            <circle cx="11" cy="12" r="2.500" fill="#5fbc3f" />
            <circle cx="18" cy="10" r="2.800" fill="#f2c22c" />
            <circle cx="15" cy="20" r="2.500" fill="#7da0cf" />
            <path d="M26 7L18 31" stroke="#e08a2c" strokeWidth="2.800" strokeLinecap="round" />
            <path d="M24 8c-1-3 1-6 1-8 2 2 6 2 8 3-1 3-4 6-7 7z" fill="#c99a63" />
          </Slot>
        </nav>
        <button type="button" aria-label="Show hidden icons" className="relative mr-[7px] ml-auto flex items-center">
          <svg width="9" height="5" aria-hidden="true"><path d="M4.500 0L9 5H0z" fill="#fff" /></svg>
        </button>
      </div>
      <div className="flex w-[171px] shrink-0 items-center bg-[#525779] pt-[2px] pl-[6px]">
        <svg width="64" height="18" fill="none" aria-hidden="true">
          <path d="M1 3v3h5V3M2 0v3M5 0v3M3.500 6v10" stroke="#fff" strokeWidth="1.300" />
          <path d="M8.500 2.500h6v12h-6z" stroke="#fff" strokeWidth="1.500" />
          <path d="M10 1h3" stroke="#fff" strokeWidth="1.500" />
          <path d="M10.500 5h2v7.500h-2z" fill="#fff" />
          <path d="M24 12h2v3h-2zM27 10h2v5h-2zM30 8h2v7h-2zM33 6h2v9h-2zM36 4h2v11h-2z" fill="#fff" />
          <path d="M50 6h2.500L56.500 2v13l-4-4H50z" fill="#fff" />
          <path d="M59 5.500c2 2 2 4 0 6" stroke="#fff" strokeWidth="1.200" />
        </svg>
        <time className="mr-auto ml-[18px] text-center font-['Open_Sans','Noto_Sans',sans-serif] text-[11px] leading-[17px]">
          19:59
          <br />
          15-09-2013
        </time>
      </div>
    </footer>
  );
}

const menu = ["File", "Edit", "View", "Project", "Source", "Process", "Window", "Help"];

export default function App() {
  return (
    <div className="flex h-screen min-h-[560px] flex-col overflow-hidden bg-[#f0f0f0] font-['Liberation_Sans',Arial,sans-serif] text-[11px] leading-[14px] text-black">
      <header className="relative flex h-[23px] shrink-0 items-center border-b border-[#6f78b5] bg-[#8a93d0] pl-[2px]">
        <Svg size={16}>{isePlate}</Svg>
        <h1 className="flex-1 pt-px pr-[18px] text-center font-['Open_Sans','Noto_Sans',sans-serif] text-[14px] leading-5 text-[#232742]">
          Xilinx - ISE - C:\DATAPATH\DATAPATH.ise - [datapath.ngr]
        </h1>
        <div className="absolute top-0 right-[3px] flex">
          <button type="button" aria-label="Minimize" className="flex h-[19px] w-[26px] items-center justify-center">
            <svg width="8" height="14" aria-hidden="true"><path d="M0 9h8v2H0z" fill="#1b1b1b" /></svg>
          </button>
          <button type="button" aria-label="Restore" className="flex h-[19px] w-[27px] items-center justify-center">
            <svg width="11" height="11" fill="none" shapeRendering="crispEdges" aria-hidden="true">
              <path d="M2 .5h8.500V8" stroke="#1b1b1b" />
              <path d="M.5 2.500h7v7h-7zM0 3.500h8" stroke="#1b1b1b" />
            </svg>
          </button>
          <button type="button" aria-label="Close" className="flex h-[19px] w-[45px] items-center justify-center bg-[#c75050]">
            <svg width="8" height="8" aria-hidden="true"><path d="M.5 1l7 6M7.500 1l-7 6" stroke="#fff" strokeWidth="1.700" /></svg>
          </button>
        </div>
      </header>

      <div className="flex h-[23px] shrink-0 items-center border-b border-[#a0a0a0] pl-px">
        <Svg size={14}>{hdlDoc}</Svg>
        <nav aria-label="Menu" className="ml-[6px] flex gap-[11px] font-['Open_Sans','Noto_Sans',sans-serif] text-[11px]">
          {menu.map((m) => (
            <button key={m} type="button">{m}</button>
          ))}
        </nav>
        <div className="ml-auto flex gap-[2px]">
          <button type="button" aria-label="Minimize document" className="flex h-3 w-[14px] items-center justify-center border border-[#a8a8a8]">
            <svg width="8" height="8"><path d="M0 5h6v2H0z" fill="#000" /></svg>
          </button>
          <button type="button" aria-label="Restore document" className="flex h-3 w-[14px] items-center justify-center border border-[#a8a8a8]">
            <svg width="8" height="8" fill="none" shapeRendering="crispEdges"><path d="M2 1h6M2.500 1v2M7.500 1v4.500H6M0 4h6M.5 4v3.500h5V4" stroke="#000" /></svg>
          </button>
          <button type="button" aria-label="Close document" className="ml-[2px] flex h-3 w-[14px] items-center justify-center border border-[#a8a8a8]">
            <svg width="8" height="8"><path d="M.5.5l7 7M7.500.5l-7 7" stroke="#000" strokeWidth="1.500" /></svg>
          </button>
        </div>
      </div>

      <div className="flex h-[47px] shrink-0 flex-col gap-[2px]">
        <div className="flex h-[22px] items-center" role="toolbar" aria-label="Standard">
          <Handle />
          <Tools names={["newFile", "open", "save", "saveAll"]} />
          <Bar />
          <Tools names={["print"]} />
          <Handle />
          <Tools names={["cut", "copy", "paste", "del"]} />
          <Bar />
          <Tools names={["undo", "redo"]} />
          <Bar />
          <Tools names={["check"]} />
          <Handle />
          <Tools names={["zoomIn", "zoomOut", "fit", "shrink", "zoomSel"]} />
          <Bar />
          <Tools names={["refresh"]} />
          <Bar />
          <Tools names={["hammer"]} active="hammer" />
          <Handle />
          <Tools names={["cascade", "tileH", "tileV", "arrange"]} wide />
          <Handle />
          <Tools names={["wrench", "whatsThis"]} wide />
          <Handle />
          <Tools names={["find", "findFiles"]} />
          <label className="relative ml-px flex shrink-0">
            <span className="sr-only">Find text</span>
            <select className="h-5 w-[135px] appearance-none border border-[#a0a0a0] bg-white pl-[2px] text-[11px] leading-[18px]" defaultValue="ilen">
              <option>ilen</option>
            </select>
            <span className="pointer-events-none absolute inset-y-px right-px flex w-[15px] items-center justify-center border border-[#b4b4b4] bg-[#ececec]">
              <svg width="8" height="6"><path d="M.5 1L4 4.500 7.500 1" stroke="#444" strokeWidth="1.800" fill="none" /></svg>
            </span>
          </label>
          <Handle />
          <Tools names={["newDoc", "editDoc", "docCheck"]} />
          <Bar />
          <Tools names={["chip", "chipDown", "chipTurn", "chipX", "chipUp"]} />
          <Handle />
          <Tools names={["bulb"]} />
        </div>
        <div className="flex h-[22px] items-center" role="toolbar" aria-label="Schematic">
          <Handle />
          <div className="flex w-[53px] shrink-0 items-center gap-2">
            <button type="button" aria-label="Previous"><Svg size={14}>{art.prev}</Svg></button>
            <button type="button" aria-label="Next"><Svg size={14}>{art.next}</Svg></button>
            <Bar tight />
          </div>
          <Tools names={["lines", "linesUndo", "linesDot", "linesUndoDot"]} />
          <Bar tight />
          <Tools names={["flag", "flagNext", "flagPrev", "flagClear", "hand", "handX"]} wide />
          <Handle />
          <Tools names={["pointer"]} active="pointer" />
          <Bar tight />
          <Tools names={["gateIn", "gateFwd", "gateBack", "boxesDash", "boxesLock"]} />
          <Bar tight />
          <Tools names={["funnel", "funnelRej", "windowSpark"]} wide />
          <Bar tight />
          <Tools names={["pushUp", "pushDown", "schem", "schemBox", "docYellow", "align", "boxes"]} wide />
          <Bar tight />
          <Tools names={["back", "forward", "gauge"]} wide />
          <Bar tight />
        </div>
      </div>

      <main className="flex min-h-0 flex-1 gap-[5px] pb-[3px]">
        <aside className="flex w-[279px] shrink-0 flex-col pt-px pb-[10px] pl-px">
          <SourcesPanel />
          <section className="flex min-h-0 flex-1 flex-col">
            <PanelHeader title="Processes" />
            <div className="flex-1 border-2 border-b border-[#a9a9ae] bg-white pt-[3px] text-center text-[17px] leading-5 font-bold">
              No flow available.
            </div>
            <div role="tablist" className="flex">
              <Tab icon="proc" label="Processes" active />
            </div>
          </section>
        </aside>
        <section className="flex min-w-0 flex-1 flex-col pr-px">
          <div className="flex min-h-0 flex-1 border-2 border-r border-[#696969] border-r-[#e3e3e3] border-b-[#e3e3e3]">
            <div className="flex min-w-0 flex-1 items-center justify-center overflow-hidden border border-[#828790] bg-black">
              <Schematic />
            </div>
          </div>
          <div role="tablist" className="flex h-[27px] shrink-0 items-start">
            <Tab icon="hdl" label="datapath.vhd" />
            <Tab icon="hdl" label="datapath_tb.vhd" />
            <Tab icon="hdl" label="mult_pipe.vhd" />
            <Tab icon="hdl" label="add_pipe.vhd" />
            <Tab icon="ngr" label="datapath.ngr" active />
          </div>
        </section>
      </main>

      <section className="flex h-[116px] shrink-0 gap-[2px] pr-[2px] pl-px">
        <header className="flex w-[17px] shrink-0 flex-col items-center justify-between bg-[#99b4d1] pt-[5px] pb-1 text-white">
          <button type="button" aria-label="Close Transcript">
            <Cross />
          </button>
          <h2 className="rotate-180 [writing-mode:vertical-rl]">Transcript</h2>
        </header>
        <div className="flex min-w-0 flex-1 flex-col">
          <div className="flex h-[89px] gap-[5px]">
            <ObjectPane title="Design Objects of" subtitle="Top Level Symbol" columns={["Name", "Type"]} rows={[["datapath", "Instance"]]} />
            <ObjectPane title="Properties" subtitle="No object is selected" columns={["Name", "Value"]} rows={[]} />
          </div>
          <div role="tablist" className="flex items-start">
            <Tab icon="console" label="Console" />
            <Tab icon="error" label="Errors" />
            <Tab icon="warning" label="Warnings" />
            <Tab icon="tcl" label="Tcl Shell" />
            <Tab icon="findFiles" label="Find in Files" />
            <Tab icon="grid" label="View by Category" />
            <Tab icon="table" label="View by Name" active />
          </div>
        </div>
      </section>

      <div className="flex h-6 shrink-0 items-center justify-end pr-[2px]">
        <output className="mt-px flex h-[18px] items-center border border-t-[#a0a0a0] border-r-white border-b-white border-l-[#a0a0a0] px-[3px] font-['Open_Sans','Noto_Sans',sans-serif] text-[11px]">
          [876,496]
        </output>
        <span className="ml-[3px] h-5 w-px bg-[#d8d8d8]" />
      </div>

      <Taskbar />
    </div>
  );
}
